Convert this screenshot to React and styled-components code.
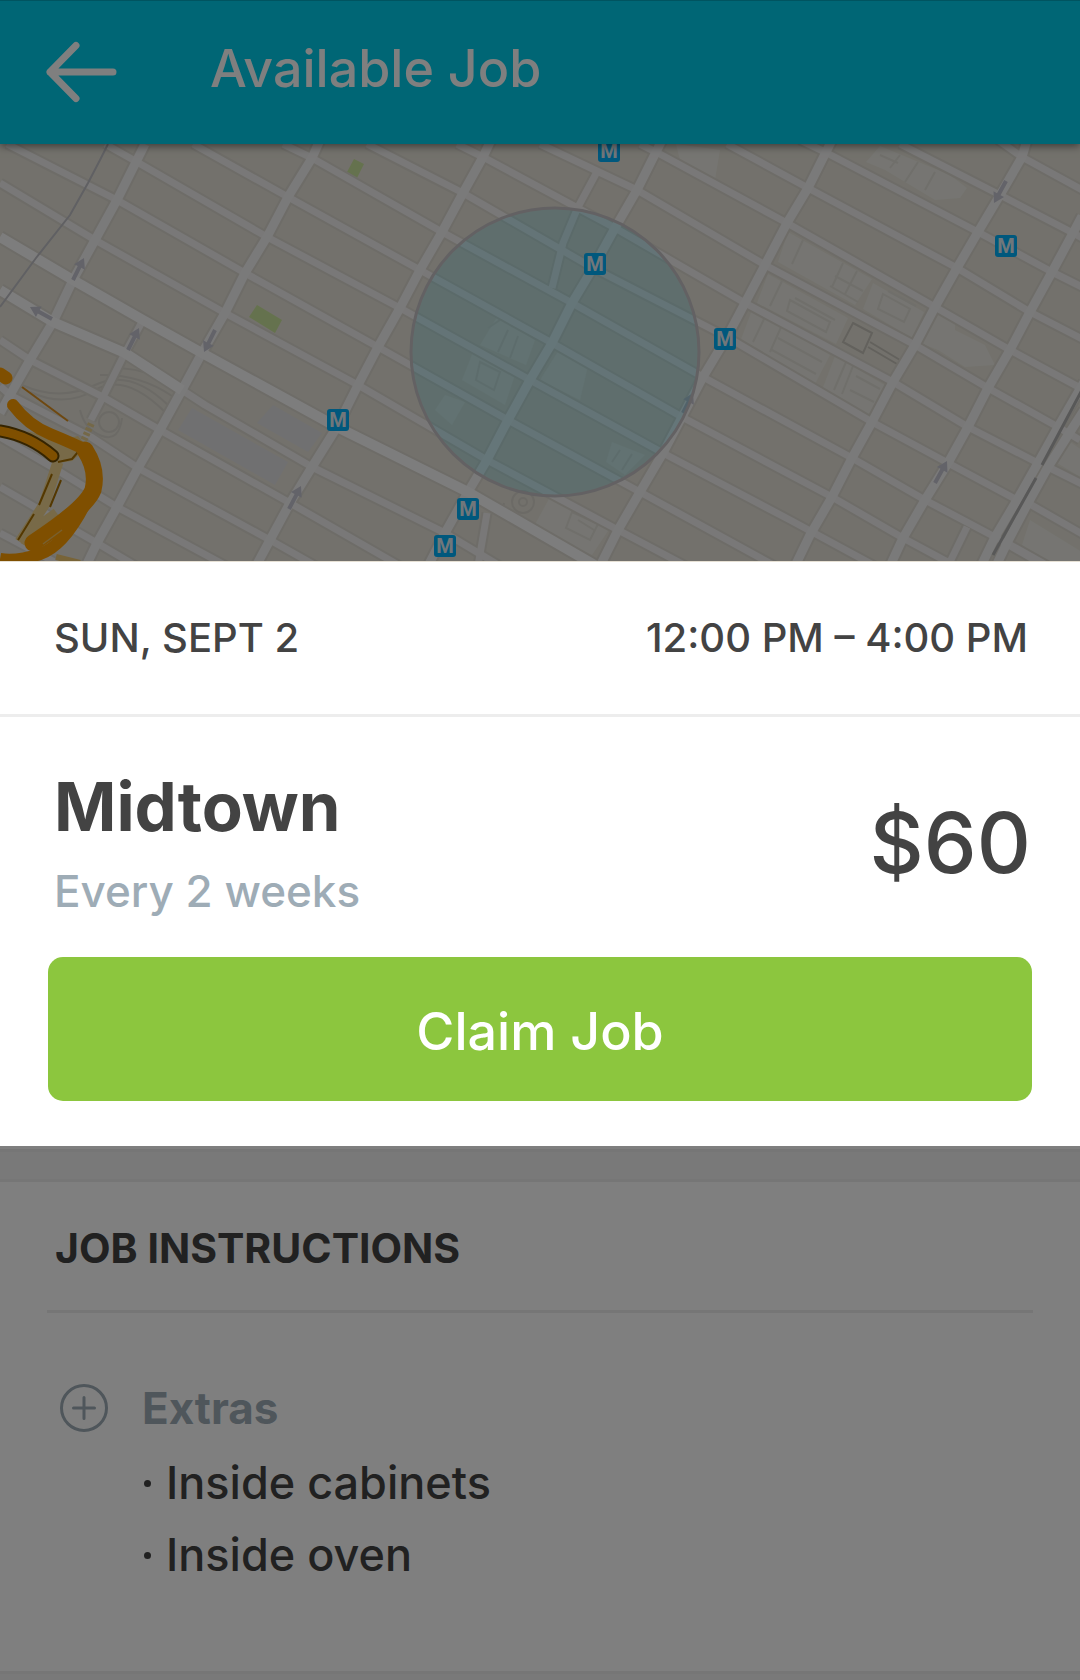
import React from "react";
import styled, { createGlobalStyle } from "styled-components";

const GlobalStyle = createGlobalStyle`
  *, *::before, *::after { box-sizing: border-box; }
  body { margin: 0; background: #fff; }
`;

const ink = "#434343";
const slate = "#9eacb6";
const line = "#ededed";

const Page = styled.div`
  position: relative;
  display: flex;
  flex-direction: column;
  min-height: 100vh;
  background: #fff;
  color: ${ink};
  font-family: Inter, "Liberation Sans", sans-serif;
  font-weight: 450;
`;

const Dim = styled.div`
  position: absolute;
  inset: 0;
  z-index: 2;
  background: rgba(0, 0, 0, 0.5);
  pointer-events: none;
`;

const Header = styled.header`
  position: relative;
  z-index: 1;
  display: flex;
  align-items: center;
  gap: 91px;
  height: 144px;
  padding: 0 44px 2px;
  border-top: 1px solid #00a8c0;
  background: #00ccea;
  box-shadow: 0 2px 8px rgba(0, 0, 0, 0.5);
`;

const BackButton = styled.button`
  display: flex;
  padding: 0;
  border: 0;
  background: none;
  color: #fff;
  cursor: pointer;
`;

const Title = styled.h1`
  margin: 0 0 6px;
  color: #fff;
  font-size: 52px;
  font-weight: 450;
  line-height: 64px;
`;

const MapArea = styled.section`
  height: 417px;
  background: #e6e3d8;

  svg {
    display: block;
    width: 100%;
    height: 100%;
  }
`;

const FocusCard = styled.section`
  position: relative;
  z-index: 3;
  border-top: 1px solid #e6e0d4;
  background: #fff;
`;

const Schedule = styled.div`
  display: flex;
  justify-content: space-between;
  padding: 48px 52px 48px 54px;
  border-bottom: 3px solid ${line};
  font-size: 40px;
  line-height: 56px;
`;

const Offer = styled.div`
  display: flex;
  flex-direction: column;
  gap: 38px;
  padding: 50px 48px 45px;
`;

const Summary = styled.div`
  display: flex;
  align-items: center;
  justify-content: space-between;
  padding: 0 1px 0 6px;
`;

const Place = styled.div`
  display: flex;
  flex-direction: column;
  gap: 16px;
`;

const PlaceName = styled.h2`
  margin: 0;
  font-size: 67px;
  font-weight: 700;
  line-height: 80px;
`;

const Frequency = styled.p`
  margin: 0;
  color: ${slate};
  font-size: 44px;
  line-height: 56px;
`;

const Price = styled.strong`
  font-size: 84px;
  font-weight: 450;
  line-height: 96px;
`;

const ClaimButton = styled.button`
  width: 100%;
  height: 144px;
  padding: 5px 0 0;
  border: 0;
  border-radius: 15px;
  background: #8cc63e;
  color: #fff;
  font-family: inherit;
  font-size: 52px;
  font-weight: 450;
  line-height: 64px;
  cursor: pointer;
`;

const Band = styled.div`
  flex: ${(p) => (p.$fill ? "1 0 auto" : "none")};
  height: ${(p) => (p.$fill ? "auto" : "33px")};
  border-top: 3px solid ${line};
  border-bottom: ${(p) => (p.$fill ? "0" : `3px solid ${line}`)};
  background: #f2f2f2;
`;

const Instructions = styled.section`
  padding: 0 47px 80px;
`;

const SectionTitle = styled.h3`
  margin: 0 0 56px;
  padding: 38px 8px 34px;
  border-bottom: 3px solid ${line};
  font-size: 41px;
  font-weight: 700;
  line-height: 56px;
`;

const Extra = styled.div`
  display: grid;
  grid-template-columns: 48px 1fr;
  column-gap: 34px;
  align-items: center;
  padding: 0 13px;
  font-size: 45px;
`;

const ExtraTitle = styled.h4`
  margin: 0;
  color: ${slate};
  font-size: 44px;
  font-weight: 700;
  line-height: 78px;
`;

const ExtraList = styled.ul`
  grid-column: 2;
  margin: 0;
  padding: 0;
  list-style: none;
  line-height: 72px;
`;

const ExtraItem = styled.li`
  display: flex;
  align-items: center;
  gap: 15px;
  padding-left: 2px;

  &::before {
    content: "";
    width: 7px;
    height: 7px;
    border-radius: 50%;
    background: ${ink};
  }
`;

const Spacer = styled.div`
  height: 3px;
`;

const avenues = [
  "145,144 117,200 95,240 73,280 53,322 30,360 10,395 0,413",
  "320,140 312,158 288,197 267,237 245,273 225,313 202,353 182,390 160,430 138,468 117,507 97,543 86,566",
  "491,140 483,157 463,193 442,232 420,270 400,308 378,347 358,385 337,427 312,467 290,503 270,540 256,566",
  "662,140 637,190 615,228 593,268 572,303 552,343 530,380 508,420 487,460 468,492 445,533 428,566",
  "832,140 808,188 787,223 765,265 745,303 727,337 703,377 682,417 663,453 640,492 618,530 600,566",
  "1027,140 1022,157 1000,195 978,232 957,268 935,307 915,345 893,382 872,422 852,458 832,497 810,535 795,566",
  "1082,216 1073,233 1052,272 1030,312 1010,350 988,388 968,427 948,463 925,500 903,538 890,566",
  "1084,382 1058,427 1038,463 1017,500 995,537 981,566",
  "1084,410 1070,432 1048,467 1028,503 1007,543 996,566",
];

const boulevards = [
  "0,237 73,280 143,320 202,353 337,427 468,492 605,571",
  "0,290 53,322 125,353 182,390",
];

const streets = [
  "182,390 205,405 312,467 445,533 500,566",
  "105,144 137,162 267,237 400,308 530,380 663,453 790,520 875,566",
  "7,144 117,200 245,273 378,347 508,420 640,492 775,566",
  "0,183 95,240 225,313 358,385 487,460 618,530 686,566",
  "0,340 30,360 103,397 160,430 290,503 400,566",
  "0,386 10,395 91,437 138,468 270,540 316,566",
  "0,437 57,470 117,507 230,568",
  "0,487 97,543 136,566",
  "0,533 62,566",
  "193,144 288,197 420,270 552,343 682,417 832,497 903,538 955,566",
  "283,144 312,158 442,232 572,303 703,377 852,458 925,500 995,537 1045,566",
  "367,144 463,193 593,268 727,337 872,422 948,463 1017,500",
  "457,144 483,157 615,228 745,303 893,382 968,427 1038,463",
  "540,144 637,190 765,265 915,345 988,388 1058,427 1080,440",
  "640,144 658,153 787,223 935,307 1010,350 1084,390",
  "727,144 808,188 957,268 1030,312 1084,340",
  "800,140 825,152 978,232 1052,272 1084,288",
  "900,144 1000,195 1073,233 1084,239",
  "998,140 1022,157 1084,191",
  "1048,467 1084,485",
  "1028,503 1084,535",
  "1007,543 1048,566",
  "598,170 578,207 563,243 552,288",
  "967,527 948,566",
  "487,513 478,566",
  "143,320 125,353 103,397 91,420",
];

const arrows = [
  [73, 280, 84, 258],
  [52, 319, 30, 307],
  [128, 350, 139, 328],
  [215, 330, 204, 352],
  [289, 509, 301, 486],
  [1006, 181, 994, 203],
  [935, 483, 947, 461],
  [683, 413, 693, 393],
];

const stations = [
  [609, 151],
  [595, 264],
  [725, 339],
  [1006, 246],
  [338, 420],
  [468, 509],
  [445, 546],
];

const buildings = [
  "788,232 872,279 855,305 778,262",
  "873,283 924,312 912,338 863,309",
  "768,274 848,318 836,344 757,303",
  "752,310 830,355 815,384 740,342",
  "835,356 888,387 868,418 822,390",
  "938,313 955,318 955,330 985,345 995,365 965,367 938,350 920,343",
  "880,146 950,175 967,188 960,198 935,200 885,170 866,162",
  "497,317 535,340 526,365 480,345",
  "473,352 515,375 505,405 462,380",
  "562,345 588,366 580,400 540,380",
  "612,442 645,455 625,475 606,462",
  "445,395 465,402 452,425 435,410",
  "550,497 610,528 592,555 533,528",
  "676,144 720,150 715,180 680,160",
  "1060,435 1082,450 1082,478 1052,460",
  "1030,520 1082,552 1082,566 1050,566 1022,545",
];

const buildingDetails = [
  "M803 240L792 264M843 263L832 287M857 271L845 294M835 276L863 291M830 286L858 302",
  "M883 294L910 309L904 322L878 309ZM888 291L916 306",
  "M782 281L770 306M790 300L830 322L826 332L787 311ZM795 298L835 320",
  "M765 317L753 342M782 325L770 352M778 338L822 362M772 350L816 374",
  "M846 362L834 390M853 366L842 394M856 376L880 389M850 390L874 402",
  "M900 155L890 168M918 162L905 182M935 172L925 190M880 155L898 163",
  "M508 330L498 352M518 336L510 358M488 328L500 320",
  "M480 362L500 372L494 390L476 380Z",
  "M572 512L598 524L590 540L566 528ZM578 520L594 530",
  "M620 450L612 462M632 454L622 470",
];

const Arrow = ({ a: [x1, y1, x2, y2] }) => {
  const angle = (Math.atan2(y2 - y1, x2 - x1) * 180) / Math.PI;
  const length = Math.hypot(x2 - x1, y2 - y1);
  return (
    <g transform={`translate(${x1} ${y1}) rotate(${angle})`} fill="#c6c6d2">
      <path d={`M0-2H${length - 10}V-6L${length} 0L${length - 10} 6V2H0Z`} />
    </g>
  );
};

const Lines = ({ items, width, color }) => (
  <g fill="none" stroke={color} strokeWidth={width} strokeLinejoin="round">
    {items.map((points) => (
      <polyline key={points} points={points} />
    ))}
  </g>
);

const CityMap = () => (
  <svg viewBox="0 144 1080 417" preserveAspectRatio="xMidYMid slice" role="img" aria-label="Map of Midtown">
    <g fill="#ecebe4">
      {buildings.map((points) => (
        <polygon key={points} points={points} />
      ))}
    </g>
    <g fill="none" stroke="#e0ded6" strokeWidth="2">
      {buildingDetails.map((d) => (
        <path key={d} d={d} />
      ))}
    </g>
    <g fill="#e1e0e3">
      <polygon points="192,408 288,462 275,485 178,430" />
      <polygon points="273,405 322,433 308,452 257,423" />
    </g>
    <g fill="#cbe59c">
      <polygon points="257,305 282,320 275,333 249,317" />
      <polygon points="354,159 364,164 357,178 347,172" />
    </g>
    <g fill="none" stroke="#d8d5cc" strokeWidth="2">
      <path d="M22 385Q60 402 95 385T168 405M30 392Q65 408 95 390T165 412M100 375Q140 374 172 396M120 368Q150 370 178 386" />
      <circle cx="109" cy="422" r="10" />
      <path d="M80 410Q85 430 102 436T122 418" />
      <path d="M853 323L872 333L863 353L843 342ZM870 342L900 360M868 347L897 364" stroke="#c6c3ba" />
      <path d="M504 503Q500 520 525 527" />
      <circle cx="523" cy="502" r="11" />
      <circle cx="523" cy="502" r="4" />
    </g>

    <Lines items={streets} width={11} color="#dcd9d0" />
    <Lines items={avenues} width={13} color="#dcd9d0" />
    <Lines items={boulevards} width={14} color="#dcd9d0" />
    <Lines items={streets} width={7} color="#f2f1f0" />
    <Lines items={avenues} width={9} color="#f5f4f4" />
    <Lines items={boulevards} width={10} color="#fbfbfb" />

    <g fill="none" stroke="#c0c0c6" strokeWidth="2">
      <path d="M108 144L100 160L88 183L70 215L36 258L0 307" />
      <path d="M1082 390L1042 465M1036 478L993 555" stroke="#b0b0b0" strokeWidth="3" />
    </g>

    <g fill="none" strokeLinejoin="round">
      <path d="M84 440L92 422" stroke="#e8d090" strokeWidth="7" strokeDasharray="3 2" />
      <path d="M27 431L60 440L78 436L88 448L72 461L58 463Z" fill="#f0d490" />
      <path d="M58 462L44 505L20 542" stroke="#f0d490" strokeWidth="11" />
      <path d="M56 512L34 528L24 545" stroke="#f0d490" strokeWidth="8" />
      <path d="M52 474L39 505M61 480L50 507M34 514L18 540M58 462L72 459L78 452" stroke="#a87000" strokeWidth="2" />
      <path d="M22 387L68 421" stroke="#dd9020" strokeWidth="2" />
      <path d="M0 431Q30 436 53 456" stroke="#6a4800" strokeWidth="13" strokeLinecap="round" />
      <path d="M0 431Q30 436 53 456" stroke="#ff9f00" strokeWidth="9" strokeLinecap="round" />
      <path d="M0 374L6 378" stroke="#ff9f00" strokeWidth="13" strokeLinecap="round" />
      <path d="M13 405Q28 425 50 434T86 450" stroke="#ff9f00" strokeWidth="12" strokeLinecap="round" />
      <path d="M85 450Q98 470 93 490Q86 508 33 543" stroke="#ff9f00" strokeWidth="17" strokeLinecap="round" />
      <path d="M86 502Q64 546 40 554T0 559" stroke="#ff9f00" strokeWidth="12" />
      <path d="M43 544L62 530" stroke="#f0c060" strokeWidth="1.500" />
      <path d="M56 557L80 563" stroke="#f0c870" strokeWidth="6" />
    </g>

    {arrows.map((a) => (
      <Arrow key={a.join()} a={a} />
    ))}
    <circle cx="555" cy="352" r="144" fill="rgba(0, 196, 230, 0.17)" stroke="#c6c3c6" strokeWidth="3" />
    {stations.map(([x, y]) => (
      <g key={`${x}-${y}`}>
        <rect x={x - 11} y={y - 11} width="22" height="22" rx="3" fill="#00b0fa" />
        <text x={x} y={y + 7} textAnchor="middle" fill="#e2eef4" fontFamily="Roboto, sans-serif" fontSize="20" fontWeight="700">
          M
        </text>
      </g>
    ))}
  </svg>
);

const BackIcon = () => (
  <svg width="75" height="64" viewBox="0 0 75 64" fill="none" stroke="currentColor" strokeWidth="7" strokeLinecap="round" strokeLinejoin="round" aria-hidden="true">
    <path d="M32 5.500L6 32L32 58.500M6 32H69" />
  </svg>
);

const PlusIcon = () => (
  <svg width="48" height="48" viewBox="0 0 48 48" fill="none" stroke={slate} strokeWidth="3" strokeLinecap="round" aria-hidden="true">
    <circle cx="24" cy="24" r="22.500" />
    <path d="M24 13.500V34.500M13.500 24H34.500" />
  </svg>
);

export default function App() {
  return (
    <Page>
      <GlobalStyle />
      <Header>
        <BackButton type="button" aria-label="Back">
          <BackIcon />
        </BackButton>
        <Title>Available Job</Title>
      </Header>
      <MapArea>
        <CityMap />
      </MapArea>
      <FocusCard>
        <Schedule>
          <span>SUN, SEPT 2</span>
          <span>12:00 PM – 4:00 PM</span>
        </Schedule>
        <Offer>
          <Summary>
            <Place>
              <PlaceName>Midtown</PlaceName>
              <Frequency>Every 2 weeks</Frequency>
            </Place>
            <Price>$60</Price>
          </Summary>
          <ClaimButton type="button">Claim Job</ClaimButton>
        </Offer>
      </FocusCard>
      <Spacer />
      <Band />
      <Instructions>
        <SectionTitle>JOB INSTRUCTIONS</SectionTitle>
        <Extra>
          <PlusIcon />
          <ExtraTitle>Extras</ExtraTitle>
          <ExtraList>
            <ExtraItem>Inside cabinets</ExtraItem>
            <ExtraItem>Inside oven</ExtraItem>
          </ExtraList>
        </Extra>
      </Instructions>
      <Band $fill />
      <Dim />
    </Page>
  );
}
